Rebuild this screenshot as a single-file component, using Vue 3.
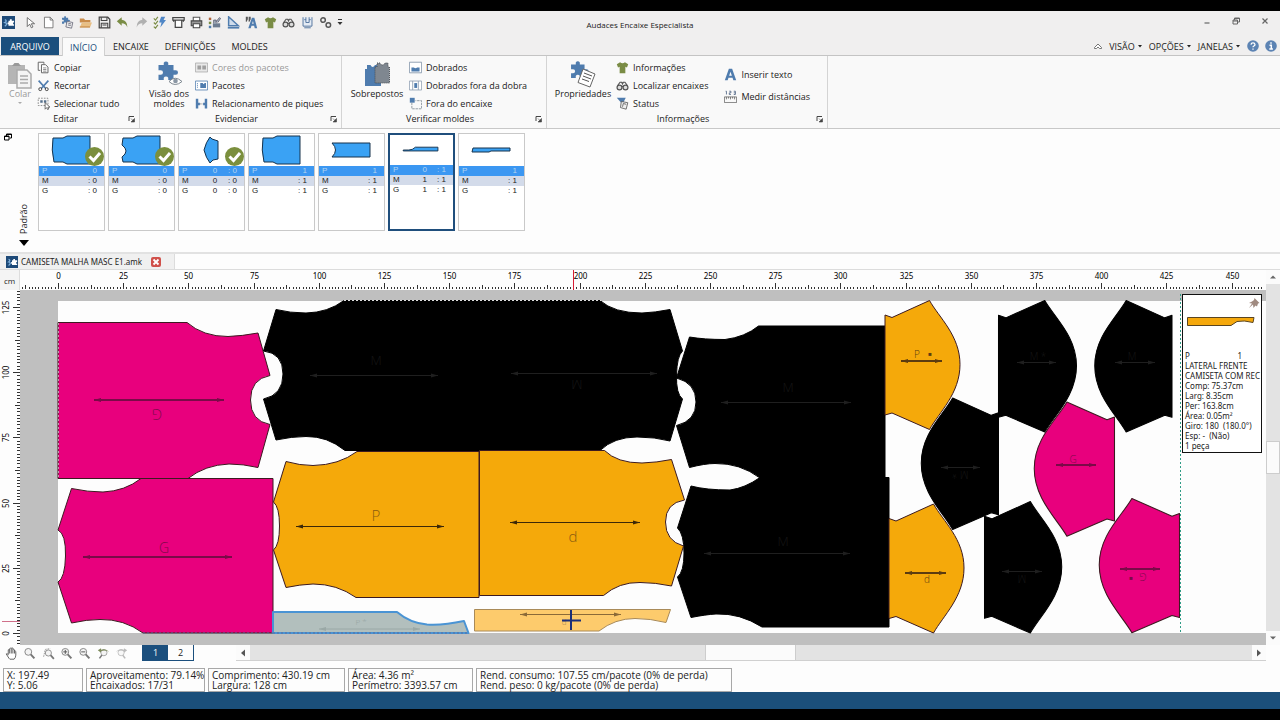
<template>
  <div class="screen">
    <div class="window">
      <header class="titlebar">
        <div class="title-left">
          <svg class="logo" viewBox="0 0 14 14" v-html="icons.logo"></svg>
          <div class="quick-bar">
            <button v-for="name in quickIcons" :key="name" class="tool-btn" :aria-label="name">
              <svg class="icon-14" viewBox="0 0 16 16" v-html="icons[name]"></svg>
            </button>
          </div>
          <button class="tool-btn more-btn" aria-label="Personalizar">
            <svg class="icon-6" viewBox="0 0 6 8"><path d="M1 1.5h4" stroke="#333" /><path d="M0.5 4h5L3 7z" fill="#333" /></svg>
          </button>
        </div>
        <h1 class="app-title">Audaces Encaixe Especialista</h1>
        <div class="window-controls">
          <button class="tool-btn" aria-label="Minimizar">
            <svg class="icon-10" viewBox="0 0 10 10"><path d="M2.5 7h5" stroke="#666" stroke-width="1.2" /></svg>
          </button>
          <button class="tool-btn" aria-label="Restaurar">
            <svg class="icon-10" viewBox="0 0 10 10"><path d="M3.5 4V2h5v4h-2M2 4h4.500v4H2zM3.500 2.500h5M2 5h4.500" fill="none" stroke="#666" /></svg>
          </button>
          <button class="tool-btn" aria-label="Fechar">
            <svg class="icon-10" viewBox="0 0 10 10"><path d="M2.500 2.500l5 5M7.500 2.500l-5 5" stroke="#666" stroke-width="1.200" /></svg>
          </button>
        </div>
      </header>

      <nav class="tabs">
        <button class="tab file-tab">ARQUIVO</button>
        <button class="tab active">INÍCIO</button>
        <button class="tab">ENCAIXE</button>
        <button class="tab">DEFINIÇÕES</button>
        <button class="tab">MOLDES</button>
        <div class="tabs-right">
          <svg class="icon-10" viewBox="0 0 10 10"><path d="M1.500 6.500L5 3l3.500 3.500v1h-2L5 6 3.500 7.500h-2z" fill="#fff" stroke="#555" stroke-width="0.800" /></svg>
          <button v-for="menu in menus" :key="menu" class="menu-btn">
            {{ menu }}
            <svg class="icon-6" viewBox="0 0 6 8"><path d="M1 3h4L3 5.500z" fill="#222" /></svg>
          </button>
          <button class="tool-btn" aria-label="Ajuda">
            <svg class="icon-12" viewBox="0 0 12 12"><circle cx="6" cy="6" r="5.800" fill="#5c83b3" /><path d="M4 4.600Q4.200 2.900 6 2.900T8 4.500Q8 5.400 6.900 6 6 6.500 6 7.300M6 8.500v1.300" fill="none" stroke="#fff" stroke-width="1.300" /></svg>
          </button>
          <button class="tool-btn" aria-label="Sobre">
            <svg class="icon-12" viewBox="0 0 12 12"><circle cx="6" cy="6" r="5.800" fill="#5c83b3" /><path d="M6 2.200v1.600M4.500 5.200H6.300V9M4.300 9.100h3.600" fill="none" stroke="#fff" stroke-width="1.500" /></svg>
          </button>
        </div>
      </nav>

      <section class="ribbon">
        <div v-for="group in groups" :key="group.label" class="group" :class="group.cls">
          <div class="group-body">
            <button class="big-btn" :class="{ disabled: group.big.disabled }">
              <svg class="icon-28" viewBox="0 0 28 28" v-html="icons[group.big.icon]"></svg>
              <span>{{ group.big.label }}</span>
              <svg v-if="group.big.caret" class="icon-6" viewBox="0 0 6 8"><path d="M1 3h4L3 5z" fill="#aaa" /></svg>
            </button>
            <div v-for="(col, c) in group.cols" :key="c" class="btn-list" :class="{ loose: col.length < 3 }">
              <button
                v-for="item in col"
                :key="item.label"
                class="small-btn"
                :class="{ disabled: item.disabled }"
              >
                <svg class="icon-14" viewBox="0 0 16 16" v-html="icons[item.icon]"></svg>
                {{ item.label }}
              </button>
            </div>
          </div>
          <div class="group-label">
            <span>{{ group.label }}</span>
            <svg class="launcher" viewBox="0 0 8 8"><path d="M1 6V1.500h5" fill="none" stroke="#444" /><path d="M3 3.500l2 2M6.500 3.500V7H3z" stroke="#444" fill="#444" stroke-width="0.600" /></svg>
          </div>
        </div>
      </section>

      <section class="molds">
        <div class="molds-side">
          <svg class="icon-8" viewBox="0 0 8 8"><path d="M2.500 3V1h5v4h-2M0.500 3h4.500v4H0.500zM0.500 3.500h4.500M2.500 1.500h5" fill="none" stroke="#000" /></svg>
          <div class="side-name">
            <span class="vertical">Padrão</span>
            <svg class="arrow-down" viewBox="0 0 10 6"><path d="M0 0h10L5 6z" fill="#000" /></svg>
          </div>
        </div>
        <div v-for="(mold, m) in molds" :key="m" class="card" :class="{ selected: mold.selected }">
          <div class="card-pic">
            <svg class="mold-svg" viewBox="0 0 65 32">
              <path :d="mold.d" fill="#3aa2f4" stroke="#16324c" />
            </svg>
            <svg v-if="mold.done" class="check" viewBox="0 0 19 19">
              <circle cx="9.500" cy="9.500" r="9.500" fill="#7b8f3d" />
              <path d="M4.500 9.500l4 4 6.500-7.500" fill="none" stroke="#fff" stroke-width="3" />
            </svg>
          </div>
          <table class="sizes">
            <tbody>
              <tr v-for="row in mold.rows" :key="row[0]">
                <th>{{ row[0] }}</th>
                <td>{{ row[1] }}</td>
                <td>{{ row[2] }}</td>
              </tr>
            </tbody>
          </table>
        </div>
      </section>

      <div class="doc-tabs">
        <div class="doc-tab">
          <svg class="icon-12" viewBox="0 0 14 14" v-html="icons.logo"></svg>
          <span>CAMISETA MALHA MASC E1.amk</span>
          <button class="close-btn" aria-label="Fechar documento">
            <svg class="icon-10" viewBox="0 0 10 10"><path d="M2.500 2.500l5 5M7.500 2.500l-5 5" stroke="#fff" stroke-width="1.800" /></svg>
          </button>
        </div>
      </div>

      <main class="workspace">
        <div class="ruler-unit">cm</div>
        <svg class="ruler-top">
          <path v-for="t in topTicks" :key="t.i" :d="`M${t.pos} ${t.start}V19`" stroke="#333" />
          <text v-for="t in topLabels" :key="t.value" :x="t.pos" y="9" text-anchor="middle">{{ t.value }}</text>
          <path d="M553.500 0V20" stroke="#d81e36" />
        </svg>
        <svg class="ruler-left">
          <path v-for="t in leftTicks" :key="t.i" :d="`M${t.start} ${t.pos}H20`" stroke="#333" />
          <text
            v-for="t in leftLabels"
            :key="t.value"
            text-anchor="middle"
            :transform="`translate(9 ${t.pos}) rotate(-90)`"
          >{{ t.value }}</text>
          <path d="M2 331.500H20" stroke="#d0708a" />
        </svg>

        <div class="canvas">
          <svg class="sheet">
            <rect x="38" y="11" width="100%" height="332" fill="#fdfdfd" />
            <g transform="translate(-20 -290)" stroke-linejoin="round">
              <path v-for="(p, i) in pieces" :key="i" :d="p.d" :fill="p.fill" :stroke="p.stroke || '#3c1a20'" :stroke-width="p.width || 1" />
              <path
                v-for="(s, i) in sleeves"
                :key="'s' + i"
                d="M0 14.500L7 17 44.500 0C54 17 75 35 75 64S54 112 44.500 129L7 112.500 0 114.500Z"
                :transform="`translate(${s.x} ${s.y}) scale(${s.sx} ${s.sy})`"
                :fill="s.fill"
                :stroke="s.fill === '#000' ? '#000' : '#3c1a20'"
              />
              <g fill="none" stroke-dasharray="2 2">
                <path d="M344 300.500H601" stroke="#ddd" />
                <path d="M58.500 323V478" stroke="#b8a0ac" />
                <path d="M143 633H273M273 633H469" stroke="#5a6a9a" />
                <path d="M1180.500 294V633" stroke="#2f9c86" />
              </g>
              <g v-for="(a, i) in arrows" :key="'a' + i" :stroke="a.color" :fill="a.color">
                <path :d="`M${a.x1} ${a.y}H${a.x2}`" :stroke-width="a.w || 1" />
                <path :d="`M${a.x1} ${a.y}l7 -2v4zM${a.x2} ${a.y}l-7 -2v4z`" stroke="none" />
              </g>
              <text
                v-for="(t, i) in marks"
                :key="'t' + i"
                :fill="t.color"
                :font-size="t.size"
                text-anchor="middle"
                :transform="`translate(${t.x} ${t.y}) rotate(${t.turn || 0})`"
              >{{ t.text }}</text>
              <path d="M562 620.500H581M571 610V630" stroke="#1b2f78" stroke-width="2" />
            </g>
          </svg>

          <aside class="info">
            <svg class="pin" viewBox="0 0 12 12"><path d="M6.500 1l5 5-1.500.500-1 3-1.500-1L5.500 11 5 7.500 1 11l3-4.500-3-.5L4 4.500 6 3z" fill="#a08a80" /></svg>
            <svg class="info-pic" viewBox="0 0 76 12"><path d="M3.500 1.500H70L69 6.500Q60 4 53 5.500L47 9.500H3.500z" fill="#f5a80c" stroke="#5a4520" /></svg>
            <div class="info-size"><span>P</span><span>1</span></div>
            <p v-for="line in infoLines" :key="line">{{ line }}</p>
          </aside>
        </div>

        <div class="vscroll">
          <button class="scroll-btn" aria-label="Subir">
            <svg class="icon-8" viewBox="0 0 8 8"><path d="M1 5.500h6L4 2.500z" fill="#666" /></svg>
          </button>
          <div class="track before"></div>
          <div class="thumb"></div>
          <div class="track after"></div>
          <button class="scroll-btn" aria-label="Descer">
            <svg class="icon-8" viewBox="0 0 8 8"><path d="M1 2.500h6L4 5.500z" fill="#666" /></svg>
          </button>
        </div>
      </main>

      <div class="view-bar">
        <div class="view-tools">
          <button v-for="name in viewIcons" :key="name" class="tool-btn" :aria-label="name">
            <svg class="icon-14" viewBox="0 0 16 16" v-html="icons[name]"></svg>
          </button>
        </div>
        <div class="pages">
          <button class="page current">1</button>
          <button class="page">2</button>
        </div>
        <div class="hscroll">
          <button class="scroll-btn" aria-label="Esquerda">
            <svg class="icon-8" viewBox="0 0 8 8"><path d="M6 0.500v7L2 4z" fill="#555" /></svg>
          </button>
          <div class="track before"></div>
          <div class="thumb"></div>
          <div class="track after"></div>
          <button class="scroll-btn" aria-label="Direita">
            <svg class="icon-8" viewBox="0 0 8 8"><path d="M2 0.500v7L6 4z" fill="#555" /></svg>
          </button>
        </div>
      </div>

      <footer class="status">
        <div v-for="box in statusBoxes" :key="box.name" class="status-box" :class="box.name">
          <span>{{ box.top }}</span>
          <span>{{ box.bottom }}</span>
        </div>
      </footer>
      <div class="base-bar"></div>
    </div>
  </div>
</template>

<script setup>
import { computed, onMounted, onUnmounted, ref } from 'vue'

const blue = '#4f7cae'
const gray = '#555'

const puzzle = 'M3 4h3.500V2.500a1.800 1.800 0 0 1 3 0V4H13v3.500h1.500a1.500 1.500 0 0 1 0 3H13V14H9.500v-1.500a1.700 1.700 0 0 0-3 0V14H3v-3.500h1.500a1.500 1.500 0 0 0 0-3H3z'
const shirt = 'M1 4l4-2.500Q8 4 11 1.500L15 4l-1.500 4-2-.8V15h-7V7.200l-2 .8z'
const binoculars = `<circle cx="4.300" cy="10.500" r="3" fill="#ddd" stroke="#555" stroke-width="1.500"/><circle cx="11.700" cy="10.500" r="3" fill="#ddd" stroke="#555" stroke-width="1.500"/><path d="M2 8l3-4 2 0 1 2 1-2h2l3 4M7 9h2" fill="none" stroke="#555" stroke-width="1.500"/>`
const lens = '<circle cx="6.500" cy="6" r="4.200" fill="#f4f4f4" stroke="#888" stroke-width="1.200"/><path d="M9.500 9l4.500 5" stroke="#777" stroke-width="2.400"/>'

const icons = {
  logo: '<rect width="14" height="14" fill="#1e4a78"/><path d="M3 4Q6 5 3 7Q7 8 3 11" fill="none" stroke="#7fb0dc" stroke-width="1.500"/><path d="M7 5h1.500V3.500h2V5H13v2h-1v2h1v1.500H7V9H6V7h1z" fill="#fff"/>',
  cursor: '<path d="M4 2v11l3-3 2 4.500 2-1-2-4h4z" fill="#fff" stroke="#555"/>',
  novo: '<path d="M3 1.500h7l3.500 3.500v9.500H3zM10 1.500V5h3.500" fill="#fff" stroke="#666"/>',
  moldes: `<g transform="translate(-1 -1) scale(.75)"><path d="${puzzle}" fill="${blue}"/></g><path d="M7.500 6.500l7 1.500-1.500 7-7-1.500z" fill="#eee" stroke="#667"/><path d="M9 9l3.500.8M8.500 11l3.500.8" stroke="#667"/>`,
  abrir: '<path d="M1 3h5l1.500 2H14v3H1z" fill="#c98c4a"/><path d="M1 14l2.500-6H16l-2.500 6z" fill="#e8bf84"/><path d="M1 13.500h12.500" stroke="#b8752f"/>',
  salvar: '<path d="M1.500 1.500H12L14.500 4v10.500h-13z" fill="#eee" stroke="#444" stroke-width="1.500"/><path d="M4 1.500v4h7v-4M4 14.500V9h8v5.500M5.500 11h5" fill="none" stroke="#444" stroke-width="1.300"/>',
  desfazer: '<path d="M1 6.500L7 1.500v3Q14 5 14 14Q12 9 7 9v3z" fill="#7a8c45"/>',
  refazer: '<path d="M15 6.500L9 1.500v3Q2 5 2 14Q4 9 9 9v3z" fill="#b0b0b0"/>',
  auto: '<path d="M1 3l2 2 3-4M1 8l2 2 3-4M1 13l2 2 3-4" fill="none" stroke="#7a8c45" stroke-width="1.400"/><path d="M10 1h5l-2 4h3l-7 9 1.500-6H7.500z" fill="#4f86c6"/>',
  plotar: '<path d="M1 2h14v3H1zM4 5v9h8V5M2 5v2M14 5v2" fill="#fff" stroke="#444" stroke-width="1.500"/>',
  imprimir: '<path d="M4 6V1.500h8V6" fill="#fff" stroke="#555" stroke-width="1.300"/><path d="M1.500 6h13v6h-13z" fill="#999" stroke="#444" stroke-width="1.300"/><path d="M4 9.500h8v5H4z" fill="#fff" stroke="#444" stroke-width="1.300"/>',
  relatorio: `<path d="M1 2h3v3H1z" fill="#b0643c"/><path d="M1 7h3v3H1z" fill="#7a8c45"/><path d="M1 12h3v3H1z" fill="${blue}"/><path d="M6 9h9v5H6z" fill="#6d7c90"/><path d="M7 9V5h3v4M10 7l4-5 1.500 1-3.500 5" fill="#a9b6c6" stroke="#556"/>`,
  esquadro: `<path d="M2 1l12 11H2z" fill="#cfdcec" stroke="${blue}" stroke-width="1.800"/><path d="M1 14.500h14" stroke="${blue}" stroke-width="2"/>`,
  texto: `<path d="M1 1h2.500v3L2 7H1zM4.500 1H7v3L5.500 7h-1z" fill="#555"/><path d="M4 15L8.500 2h3L15 15h-3l-.8-3H8l-1 3zM8.700 9.500h2L9.800 6z" fill="${blue}" fill-rule="evenodd"/>`,
  camisa: `<path d="${shirt}" fill="#7a8c45"/>`,
  binoculo: binoculars,
  medidas: '<path d="M2.500 1.500v11h11v-11M6 1.500V8h4V1.500M4 4.500h2M10 4.500h2M4 14.500h8" fill="#e4ebf4" stroke="#5577a0" stroke-width="1.200"/>',
  engrenagem: '<circle cx="5" cy="5" r="2.800" fill="none" stroke="#555" stroke-width="1.800"/><circle cx="11.500" cy="11" r="2.800" fill="none" stroke="#555" stroke-width="1.800"/>',
  colar: '<path d="M2 4h17v19H2z" fill="#b5b5b5"/><path d="M6 5l2.500-3h4L15 5z" fill="#999"/><path d="M11 9h10l4 4v14H11z" fill="#f4f4f4" stroke="#aaa" stroke-width="1.500"/><path d="M14 15h8M14 18.500h8M14 22h8" stroke="#aaa" stroke-width="1.500"/>',
  copiar: '<path d="M1.500 1.500h7v2M1.500 1.500v10H4M5.500 4.500h5l3 3v7h-8z" fill="#fff" stroke="#666" stroke-width="1.200"/><path d="M7.500 8.500h4M7.500 10.500h4M7.500 12.500h4" stroke="#777"/>',
  recortar: '<path d="M2 2l9 10M14 2L5 12" stroke="#4f7cae" stroke-width="2"/><circle cx="4" cy="12.500" r="1.800" fill="#fff" stroke="#444" stroke-width="1.200"/><circle cx="12" cy="12.500" r="1.800" fill="#fff" stroke="#444" stroke-width="1.200"/>',
  selecionar: '<path d="M1.500 1.500h12v9h-12z" fill="none" stroke="#777" stroke-dasharray="2 1.500"/><path d="M4 4h3v3H4zM8.500 4h3v3h-3z" fill="#56708c"/><path d="M10 7v8l2-2 1 2.500 1.500-.7-1-2.300H16z" fill="#fff" stroke="#555"/>',
  visao: `<g transform="translate(-1 -2) scale(1.5)"><path d="${puzzle}" fill="${blue}"/></g><path d="M14 20.500q6-6.500 13 0q-7 6-13 0z" fill="#fff" stroke="#7d8790"/><circle cx="20.500" cy="20" r="2.300" fill="#8b97a4"/>`,
  cores: '<path d="M.5 2.500h15v11H.5z" fill="#e8e8e8" stroke="#aaa"/><path d="M3 5.500h4.500v5H3zM9 5.500h4.500v5H9z" fill="#a0a0a0"/>',
  pacotes: `<path d="M.5 2.500h15v11H.5z" fill="#fff" stroke="${blue}"/><path d="M3 5v6" stroke="${blue}" stroke-dasharray="1.500 1"/><path d="M6.500 5h3l1 1.500L12 5h1.500v6h-7z" fill="${blue}"/>`,
  piques: `<path d="M1 2h3v5h2v3H4v4H1zM15 2h-3v5h-2v3h2v4h3z" fill="${blue}"/><path d="M6 8.500h4" stroke="${gray}" stroke-dasharray="1 1"/>`,
  sobrepostos: `<path d="M2 8h2V4h3.500q2 4 4.500 0H15v4h3v17H2z" fill="${blue}"/><path d="M12 6h2V2h3q2.500 4 5 0h3v4h1.500v16H12z" fill="#7f8790" stroke="#4a4f55" stroke-dasharray="1 1"/>`,
  dobrados: `<path d="M.5 1.500h15v13H.5z" fill="#fff" stroke="#7d8fa5"/><path d="M3 8h3q2 2 4 0h3v5H3z" fill="${blue}"/>`,
  foraDobra: `<path d="M.5 2.500h15v11H.5z" fill="#fff" stroke="#8d9cb0"/><path d="M4.500 2.500v11M11.500 2.500v11" stroke="#8d9cb0"/><path d="M6.500 5h3.500v6H6.500z" fill="${blue}"/>`,
  foraEncaixe: `<path d="M1 1h6v6H1z" fill="${blue}"/><path d="M3.500 7v7.500h12V4.500H8" fill="none" stroke="#7d8790" stroke-dasharray="3 1"/>`,
  propriedades: `<g transform="translate(-2 -2) scale(1.350)"><path d="${puzzle}" fill="${blue}"/></g><path d="M14 8l12 5-5 13-12-4.500z" fill="#fff" stroke="#666"/><path d="M15 12l8 3M14 15l8 3M13 18l7 2.500" stroke="#555"/>`,
  status: `<path d="M1 1h11L8 9z" fill="${blue}"/><path d="M6.500 5.500l8 1.500-2 8-7-2z" fill="#eee" stroke="#555"/><path d="M8 12l1-4 3.500 1" fill="none" stroke="#555"/>`,
  inserir: `<path d="M1 15L6 1h4l5 14h-3.500l-1-3H5.500l-1 3zM6.300 9.500h3.400L8 4.500z" fill="${blue}" fill-rule="evenodd"/>`,
  medir: '<path d="M.5 15.500v-7h15v7zM3 8.500v3M5.500 8.500v2M8 8.500v3M10.500 8.500v2M13 8.500v3" fill="none" stroke="#666"/><path d="M2 1.500h1v4M6.500 1.500h2v2h-2v2h2M12 1.500h2v4h-2M12 3.500h2" fill="none" stroke="#4a6080"/>',
  mao: '<path d="M5 14Q3 11 1.500 8.500q1-1 2.500 1V3.500q1-1 1.700 0V2q1-1.200 2 0V1.500q1-1 2 0V3q1.200-.8 2 .5V5q1-.5 1.600.5V10q0 3-2.100 5H6zM5.700 3.500V8M7.700 2V8M9.700 3V8M11.700 5v3" fill="#fff" stroke="#555" stroke-width="1.100"/>',
  lupa: lens,
  lupaArea: '<g transform="translate(2 2) scale(.9)">' + lens + '</g><path d="M2 12l2-9 6-1" fill="none" stroke="#888" stroke-dasharray="2 1"/>',
  lupaMais: lens + '<path d="M4 6h5M6.500 3.500v5" stroke="#555" stroke-width="1.200"/>',
  lupaMenos: lens + '<path d="M4 6h5" stroke="#555" stroke-width="1.200"/>',
  zoomAnterior: '<circle cx="8.500" cy="7" r="3.800" fill="#f4f4f4" stroke="#999"/><path d="M6 10l-3 4" stroke="#777" stroke-width="2"/><path d="M1 4l4-2.500v2q6-2 10 2.500-5-2.500-10-1v2z" fill="#7d8a5a"/>',
  zoomSeguinte: '<circle cx="7.500" cy="7" r="3.800" fill="#f8f8f8" stroke="#bbb"/><path d="M9.500 10l3 4" stroke="#bbb" stroke-width="2"/><path d="M15 4l-4-2.500v2Q5 1.500 1 6q5-2.500 10-1v2z" fill="#bbb"/>'
}

const quickIcons = [
  'cursor', 'novo', 'moldes', 'abrir', 'salvar', 'desfazer', 'refazer', 'auto', 'plotar',
  'imprimir', 'relatorio', 'esquadro', 'texto', 'camisa', 'binoculo', 'medidas', 'engrenagem'
]
const viewIcons = ['mao', 'lupa', 'lupaArea', 'lupaMais', 'lupaMenos', 'zoomAnterior', 'zoomSeguinte']
const menus = ['VISÃO', 'OPÇÕES', 'JANELAS']

const groups = [
  {
    label: 'Editar',
    cls: 'edit',
    big: { icon: 'colar', label: 'Colar', disabled: true, caret: true },
    cols: [[
      { icon: 'copiar', label: 'Copiar' },
      { icon: 'recortar', label: 'Recortar' },
      { icon: 'selecionar', label: 'Selecionar tudo' }
    ]]
  },
  {
    label: 'Evidenciar',
    cls: 'highlight',
    big: { icon: 'visao', label: 'Visão dos moldes' },
    cols: [[
      { icon: 'cores', label: 'Cores dos pacotes', disabled: true },
      { icon: 'pacotes', label: 'Pacotes' },
      { icon: 'piques', label: 'Relacionamento de piques' }
    ]]
  },
  {
    label: 'Verificar moldes',
    cls: 'verify',
    big: { icon: 'sobrepostos', label: 'Sobrepostos' },
    cols: [[
      { icon: 'dobrados', label: 'Dobrados' },
      { icon: 'foraDobra', label: 'Dobrados fora da dobra' },
      { icon: 'foraEncaixe', label: 'Fora do encaixe' }
    ]]
  },
  {
    label: 'Informações',
    cls: 'details',
    big: { icon: 'propriedades', label: 'Propriedades' },
    cols: [
      [
        { icon: 'camisa', label: 'Informações' },
        { icon: 'binoculo', label: 'Localizar encaixes' },
        { icon: 'status', label: 'Status' }
      ],
      [
        { icon: 'inserir', label: 'Inserir texto' },
        { icon: 'medir', label: 'Medir distâncias' }
      ]
    ]
  }
]

const sizeRows = (p, m, g) => [['P', ...p], ['M', ...m], ['G', ...g]]

const molds = [
  { done: true, d: 'M14 4l10 0 4-2h23v28H28l-4-2H15q-3-12-1-24z', rows: sizeRows(['', '0'], ['', ': 0'], ['', ': 0']) },
  { done: true, d: 'M14 4l10 0 4-2h23v28H28l-4-2H14l-1-5q8-6 0-12z', rows: sizeRows(['', '0'], ['', ': 0'], ['', ': 0']) },
  { done: true, d: 'M31 3l2 2 6 2v18l-5 1-3 3q-4-5-6-13q2-8 6-13z', rows: sizeRows(['0', ': 0'], ['0', ': 0'], ['0', ': 0']) },
  { d: 'M14 4l10 0 4-2h23v28H28l-4-2H15q-3-12-1-24z', rows: sizeRows(['', '1'], ['', ': 1'], ['', ': 1']) },
  { d: 'M13 9h38v14H13q7-7 0-14z', rows: sizeRows(['', '1'], ['', ': 1'], ['', ': 1']) },
  { selected: true, d: 'M13 16h6q4 0 7-3h24v4H13z', rows: sizeRows(['0', ': 1'], ['1', ': 1'], ['1', ': 1']) },
  { d: 'M14 14h37v3H32l-2 1H13z', rows: sizeRows(['', '1'], ['', ': 1'], ['', ': 1']) }
]

const pageWidth = ref(window.innerWidth)

/** Guarda a largura da janela para redesenhar a régua */
const updateWidth = () => {
  pageWidth.value = window.innerWidth
}

onMounted(() => window.addEventListener('resize', updateWidth))
onUnmounted(() => window.removeEventListener('resize', updateWidth))

// Uma marca a cada 1.25 cm
const step = 3.26

/** Monta as marcas de uma régua entre dois índices */
const buildTicks = (from, to, place) => {
  const ticks = []
  for (let i = from; i < to; i++) {
    const start = i % 20 === 0 ? 13 : i % 10 === 0 ? 15 : 17
    ticks.push({ i, pos: Math.round(place(i)) + 0.5, start, value: i * 1.25 })
  }
  return ticks
}

const withLabel = (ticks) => ticks.filter((t) => t.i >= 0 && t.i % 20 === 0)

const topTicks = computed(() => buildTicks(-11, Math.floor((pageWidth.value - 72) / step), (i) => 38 + i * step))
const topLabels = computed(() => withLabel(topTicks.value).filter((t) => t.pos < pageWidth.value - 44))
const leftTicks = buildTicks(-3, 106, (i) => 343 - i * step)
const leftLabels = withLabel(leftTicks)

const pink = '#e8007d'
const orange = '#f5a90a'

const pieces = [
  { fill: pink, d: 'M58 322.500H187Q203 336.500 228 336.500 242 336 258 333L270 375.500Q250.500 379 250.500 400T270 424.500L258 467.500Q243 464 229 464 205 465 188 478.500H58Z' },
  { fill: pink, d: 'M273 478.500V633H143Q124 619 100 619.500 87 619.500 71.500 623L58 582Q65 578 65.500 556T58 530L71.500 488.500Q88 492 103 492 125 491 141 478.500Z' },
  { fill: '#000', stroke: '#000', d: 'M344 300.500H600Q614 313 642 313 655 312.500 670 309.500L682.500 351Q677 356 676.500 375T682.500 399L670 441Q655 437 637 437 614 437 600 450.500H345Q327 436 306 436.500 292 436.500 276 440L263.500 399Q283 395 283 374T263.500 351L276 309.500Q290 313 306 313 328 312.500 344 300.500Z' },
  { fill: '#000', stroke: '#000', d: 'M758.500 326H885V478H760Q740 463 715 463.500 705 463.500 689.500 467.500L676.500 425.500Q696 421 696 402T676.500 378L689.500 337Q704 339.500 725 339.500 745 337 758.500 326Z' },
  { fill: '#000', stroke: '#000', d: 'M760 477.500H889V627H762Q740 613 716 614 706 614.500 691 617.500L677.500 577Q684 572 684 553T677.500 528L691 486Q706 490 730 490 745 488 760 477.500Z' },
  { fill: orange, d: 'M357 451.500H479V597.500H356Q337 584 313 584 300 584.500 286 587.500L273.500 550Q279.500 545 279.500 526T273.500 502L286 461.500Q300 465.500 313 465.500 339 465 357 451.500Z' },
  { fill: orange, d: 'M479.500 450.500H604.500Q617 463 642 463 657 462.500 671.500 459.500L684.500 500Q665.500 503 665.500 522T683.500 546L671.500 586Q655 582.500 640 582.500 619 582 603.500 595.500H479.500Z' },
  { fill: '#b2bfbd', stroke: '#4a94d4', width: 2, d: 'M273 612H397Q410 623 427 624.500 443 625.500 464 621L468.500 633H273Z' },
  { fill: '#fdcb6c', stroke: '#a98a58', d: 'M474.500 609.500H670.500L666 622.500Q650 618.500 635 618.500 615 618.500 599 631H474.500Z' }
]

const sleeves = [
  { x: 885, y: 300.5, sx: 1, sy: 1, fill: orange },
  { x: 889, y: 504, sx: 1, sy: 1, fill: orange },
  { x: 998.5, y: 300.5, sx: 1.04, sy: 1.02, fill: '#000' },
  { x: 1172, y: 300.5, sx: -1.03, sy: 1.02, fill: '#000' },
  { x: 998.5, y: 398, sx: -1.03, sy: 1.02, fill: '#000' },
  { x: 984.5, y: 501.5, sx: 1.03, sy: 1.02, fill: '#000' },
  { x: 1114.5, y: 402, sx: -1.07, sy: 1.04, fill: pink },
  { x: 1179.5, y: 498.5, sx: -1.07, sy: 1.04, fill: pink }
]

const onPink = '#7a0a48'
const onOrange = '#5c3c10'
const onBlack = '#1f1f1f'
const darkMark = '#161616'

const arrows = [
  { x1: 94, x2: 224, y: 400, w: 2, color: onPink },
  { x1: 83, x2: 232, y: 557, w: 2, color: onPink },
  { x1: 296, x2: 444, y: 526.5, color: '#3c2808' },
  { x1: 510, x2: 640, y: 522.5, color: '#3c2808' },
  { x1: 310, x2: 438, y: 375.5, color: onBlack },
  { x1: 511, x2: 657, y: 373.5, color: onBlack },
  { x1: 721, x2: 851, y: 402.5, color: onBlack },
  { x1: 704, x2: 850, y: 553.5, color: onBlack },
  { x1: 901, x2: 942, y: 361, w: 2, color: onOrange },
  { x1: 905, x2: 946, y: 573, w: 2, color: onOrange },
  { x1: 1017, x2: 1056, y: 362.5, color: onBlack },
  { x1: 1115, x2: 1155, y: 362.5, color: onBlack },
  { x1: 941, x2: 980, y: 467.5, color: onBlack },
  { x1: 1002, x2: 1042, y: 571.5, color: onBlack },
  { x1: 1056, x2: 1096, y: 465, w: 2, color: onPink },
  { x1: 1120, x2: 1160, y: 569, w: 2, color: onPink },
  { x1: 319, x2: 420, y: 629, color: '#9aa8a6' },
  { x1: 520, x2: 621, y: 614.5, color: '#8a6a38' }
]

const marks = [
  { text: 'G', x: 157, y: 409, turn: 180, size: 14, color: onPink },
  { text: 'G', x: 164, y: 553, size: 14, color: onPink },
  { text: 'P', x: 376, y: 521, size: 15, color: '#8a5c10' },
  { text: 'd', x: 573, y: 542, size: 15, color: '#8a5c10' },
  { text: 'M', x: 376, y: 365, size: 13, color: darkMark },
  { text: 'M', x: 577, y: 380, turn: 180, size: 13, color: darkMark },
  { text: 'M', x: 788, y: 392, size: 13, color: darkMark },
  { text: 'M', x: 783, y: 546, size: 13, color: darkMark },
  { text: 'P', x: 917, y: 358, size: 10, color: onOrange },
  { text: '■', x: 930, y: 356, size: 6, color: onOrange },
  { text: 'd', x: 927, y: 583, size: 10, color: onOrange },
  { text: 'M *', x: 1038, y: 360, size: 10, color: darkMark },
  { text: 'M', x: 1132, y: 360, size: 10, color: darkMark },
  { text: 'M *', x: 960, y: 471, turn: 180, size: 10, color: darkMark },
  { text: 'M', x: 1022, y: 575, turn: 180, size: 10, color: darkMark },
  { text: 'G', x: 1073, y: 463, size: 10, color: onPink },
  { text: 'G', x: 1143, y: 573, turn: 180, size: 10, color: onPink },
  { text: '■', x: 1131, y: 580, size: 6, color: onPink },
  { text: 'P *', x: 361, y: 625, size: 8, color: '#97a5a3' },
  { text: 'd', x: 564, y: 625, size: 8, color: '#a98a58' }
]

const infoLines = [
  'LATERAL FRENTE',
  'CAMISETA COM REC',
  'Comp: 75.37cm',
  'Larg: 8.35cm',
  'Per: 163.8cm',
  'Área: 0.05m²',
  'Giro: 180  (180.0°)',
  'Esp: -  (Não)',
  '1 peça'
]

const statusBoxes = [
  { name: 'pos', top: 'X: 197.49', bottom: 'Y: 5.06' },
  { name: 'usage', top: 'Aproveitamento: 79.14%', bottom: 'Encaixados: 17/31' },
  { name: 'length', top: 'Comprimento: 430.19 cm', bottom: 'Largura: 128 cm' },
  { name: 'area', top: 'Área: 4.36 m²', bottom: 'Perímetro: 3393.57 cm' },
  { name: 'yield', top: 'Rend. consumo: 107.55 cm/pacote (0% de perda)', bottom: 'Rend. peso: 0 kg/pacote (0% de perda)' }
]
</script>

<style>
body {
  margin: 0;
  background: #000;
}
</style>

<style scoped>
.screen {
  box-sizing: border-box;
  min-height: 100vh;
  padding: 11px 0;
  display: flex;
  flex-direction: column;
  background: #000;
  color: #222;
  font-family: "Open Sans", "Noto Sans", sans-serif;
  font-size: 10px;
}

.window {
  flex: 1;
  display: flex;
  flex-direction: column;
  background: #fdfdfd;
}

button {
  margin: 0;
  padding: 0;
  border: 0;
  background: none;
  color: inherit;
  font: inherit;
  cursor: pointer;
}

svg {
  display: block;
  flex-shrink: 0;
}

.icon-6 { width: 6px; height: 8px; }
.icon-8 { width: 8px; height: 8px; }
.icon-10 { width: 10px; height: 10px; }
.icon-12 { width: 12px; height: 12px; }
.icon-14 { width: 13px; height: 13px; }
.icon-28 { width: 28px; height: 28px; }

.titlebar {
  display: grid;
  grid-template-columns: 1fr auto 1fr;
  align-items: center;
  height: 26px;
  background: #f0efef;
}

.title-left {
  display: flex;
  align-items: center;
  padding-left: 2px;
}

.logo {
  width: 13px;
  height: 13px;
  margin-bottom: 4px;
}

.quick-bar {
  display: flex;
  justify-content: space-between;
  width: 308px;
  margin-left: 9px;
}

.quick-bar .tool-btn {
  margin-bottom: 4px;
}

.more-btn {
  margin: 0 0 4px 5px;
}

.app-title {
  margin: 0;
  font-size: 8px;
  font-weight: 400;
}

.window-controls {
  display: flex;
  justify-content: flex-end;
  gap: 19px;
  padding-right: 10px;
  margin-bottom: 6px;
}

.tabs {
  display: flex;
  height: 18px;
  padding-left: 1px;
  background: #f0efef;
  font-size: 9px;
  border-bottom: 1px solid #c4c4c4;
}

.tab {
  padding: 0 8px;
}

.file-tab {
  background: #1b4f7d;
  color: #fff;
  width: 58px;
  padding: 0;
  margin-right: 3px;
}

.tab.active {
  margin-bottom: -1px;
  padding: 0 7px;
  border: 1px solid #d0d0d0;
  border-bottom: 0;
  background: #fafafa;
  color: #1b4f7d;
}

.tabs-right {
  display: flex;
  align-items: center;
  gap: 6px;
  margin-left: auto;
  padding-right: 3px;
}

.menu-btn {
  display: flex;
  align-items: center;
  gap: 2px;
}

.ribbon {
  display: flex;
  height: 72px;
  background: #f9f9f9;
  border-bottom: 1px solid #c8c8c8;
}

.group {
  display: flex;
  flex-direction: column;
  box-sizing: border-box;
  padding: 2px 3px 0;
  border-right: 1px solid #d4d4d4;
  font-size: 9px;
}

.group.edit { width: 140px; }
.group.highlight { width: 202px; }
.group.verify { width: 205px; }
.group.details { width: 281px; }

.group-body {
  display: flex;
  height: 55px;
}

.big-btn {
  display: flex;
  flex-direction: column;
  align-items: center;
  width: 52px;
  line-height: 10px;
  padding-top: 3px;
  box-sizing: border-box;
}

.edit .big-btn { width: 34px; }
.verify .big-btn { width: 64px; }
.details .big-btn { width: 66px; }

.btn-list {
  display: flex;
  flex-direction: column;
}

.btn-list.loose {
  justify-content: center;
  gap: 4px;
  margin-left: 16px;
}

.small-btn {
  display: flex;
  align-items: center;
  gap: 4px;
  height: 18px;
  white-space: nowrap;
}

.disabled {
  color: #999;
}

.group-label {
  display: flex;
  align-items: center;
  line-height: 11px;
}

.group-label span {
  flex: 1;
  text-align: center;
}

.launcher {
  width: 8px;
  height: 8px;
}

.molds {
  display: flex;
  gap: 3px;
  height: 125px;
  padding: 4px 0 0 4px;
  border-bottom: 2px solid #e2e2e2;
  box-sizing: border-box;
}

.molds-side {
  display: flex;
  width: 31px;
  font-size: 9px;
}

.side-name {
  display: flex;
  flex-direction: column;
  align-items: center;
  justify-content: flex-end;
  gap: 6px;
  padding: 0 0 6px 6px;
}

.vertical {
  writing-mode: vertical-rl;
  transform: rotate(180deg);
  line-height: 12px;
}

.arrow-down {
  width: 10px;
  height: 6px;
}

.card {
  box-sizing: border-box;
  width: 67px;
  height: 98px;
  border: 1px solid #c9c9c9;
  background: #fff;
}

.card.selected {
  border: 2px solid #1f4e7c;
}

.card-pic {
  position: relative;
  height: 32px;
}

.card.selected .card-pic {
  height: 30px;
}

.mold-svg {
  width: 100%;
  height: 100%;
}

.check {
  position: absolute;
  right: 0;
  bottom: 0;
  width: 19px;
  height: 19px;
}

.sizes {
  width: 100%;
  border-collapse: collapse;
  table-layout: fixed;
  font-family: "Liberation Sans", sans-serif;
  font-size: 8px;
  line-height: 10px;
}

.sizes th {
  padding: 0 0 0 3px;
  font-weight: 400;
  text-align: left;
}

.sizes td {
  padding: 0 7px 0 0;
  text-align: right;
}

.sizes td:nth-child(2) {
  padding-right: 5px;
}

.sizes tr:nth-child(1) {
  background: #3b97f2;
  color: #b4d4f0;
}

.sizes tr:nth-child(2) {
  background: #d3dbea;
}

.doc-tabs {
  display: flex;
  height: 15px;
  border-bottom: 1px solid #dcdcdc;
}

.doc-tab {
  display: flex;
  align-items: center;
  gap: 3px;
  width: 168px;
  padding-left: 6px;
  background: #f0f0f0;
  border-right: 1px solid #dcdcdc;
  font-family: "Noto Sans", sans-serif;
  font-size: 8px;
  line-height: 14px;
  white-space: nowrap;
}

.close-btn {
  margin-left: 6px;
  background: #d0504a;
  border-radius: 2px;
}

.workspace {
  flex: 1;
  display: grid;
  grid-template-columns: 20px 1fr 14px;
  grid-template-rows: 20px minmax(354px, 1fr);
}

.ruler-unit {
  display: flex;
  align-items: center;
  justify-content: center;
  font-size: 8px;
  background: #f4f4f4;
  border-right: 1px solid #ddd;
}

.ruler-top,
.ruler-left {
  width: 100%;
  height: 100%;
  background: #fdfdfd;
  font-family: "Noto Sans", sans-serif;
  font-size: 8px;
}

.ruler-left {
  grid-row: 2;
}

.canvas {
  grid-row: 2;
  grid-column: 2;
  position: relative;
  overflow: hidden;
  background: #bfbfbf;
}

.sheet {
  width: 100%;
  height: 100%;
  font-family: "Open Sans", sans-serif;
  font-weight: 300;
}

.info {
  position: absolute;
  top: 4px;
  right: 4px;
  width: 78px;
  height: 157px;
  overflow: hidden;
  border: 1px solid #111;
  background: #fff;
  font-family: "Noto Sans", sans-serif;
  font-size: 8px;
  line-height: 10px;
}

.pin {
  width: 12px;
  height: 12px;
  margin: 2px 1px 0 auto;
}

.info-pic {
  width: 76px;
  height: 12px;
  margin: 7px 0 23px 1px;
}

.info-size {
  display: flex;
  justify-content: space-between;
  padding: 0 19px 0 2px;
}

.info p {
  margin: 0;
  padding-left: 2px;
  white-space: pre;
}

.vscroll {
  grid-row: 1 / 3;
  grid-column: 3;
  display: flex;
  flex-direction: column;
  background: #e3e3e3;
}

.scroll-btn {
  display: flex;
  align-items: center;
  justify-content: center;
  width: 14px;
  height: 14px;
  background: #fbfbfb;
  flex-shrink: 0;
}

.thumb {
  background: #fbfbfb;
  border: 1px solid #cdcdcd;
}

.vscroll .thumb { flex: 31; }
.vscroll .before { flex: 158; }
.vscroll .after { flex: 158; }

.view-bar {
  display: flex;
  height: 17px;
}

.view-tools {
  display: flex;
  align-items: center;
  justify-content: space-between;
  width: 123px;
  padding-left: 5px;
}

.pages {
  display: flex;
  width: 52px;
  margin-left: 14px;
  box-sizing: border-box;
  border: 1px solid #1b4f7d;
  border-top: 0;
  height: 16px;
}

.page {
  flex: 1;
  font-size: 9px;
  line-height: 14px;
}

.page.current {
  background: #1b4f7d;
  color: #fff;
}

.hscroll {
  flex: 1;
  display: flex;
  margin: 0 14px 0 42px;
  height: 15px;
  border-bottom: 1px solid #d0d0d0;
  background: #e3e3e3;
}

.hscroll .scroll-btn {
  height: 15px;
}

.hscroll .thumb { flex: 90; border-top: 0; border-bottom: 0; }
.hscroll .before { flex: 456; }
.hscroll .after { flex: 457; }

.status {
  display: flex;
  gap: 3px;
  padding: 6px 3px 0;
  line-height: 10px;
}

.status-box {
  display: flex;
  flex-direction: column;
  box-sizing: border-box;
  height: 24px;
  padding: 1px 3px;
  border: 1px solid #a8a8a8;
  white-space: nowrap;
}

.pos { width: 80px; }
.usage { width: 119px; }
.length { width: 137px; }
.area { width: 125px; }
.yield { width: 256px; }

.base-bar {
  height: 17px;
  background: #1b4f7a;
}
</style>
